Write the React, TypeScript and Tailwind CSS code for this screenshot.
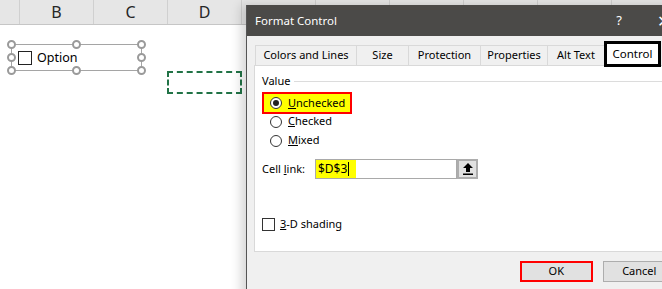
import React from "react";

const COLS = ["B", "C", "D", "", "", "", "", ""];

const TABS = [
  { label: "Colors and Lines", w: "w-[101px]" },
  { label: "Size", w: "w-[52px]" },
  { label: "Protection", w: "w-[72px]" },
  { label: "Properties", w: "w-[67px]" },
  { label: "Alt Text", w: "w-[57px]" },
];

function Handle() {
  return <span className="block w-[9px] h-[9px] rounded-full border-2 border-[#9a9a9a] bg-white" />;
}

function Radio({ checked }: { checked?: boolean }) {
  return (
    <span className="flex items-center justify-center w-[12px] h-[12px] rounded-full border border-[#333] bg-white shrink-0">
      {checked && <span className="block w-[6px] h-[6px] rounded-full bg-[#222]" />}
    </span>
  );
}

function UploadArrow() {
  return (
    <svg width="10" height="12" viewBox="0 0 10 12">
      <path d="M5 0 L10 5 L7 5 L7 9 L3 9 L3 5 L0 5 Z" fill="#000" />
      <rect x="0" y="10.5" width="10" height="1.5" fill="#000" />
    </svg>
  );
}

export default function App() {
  return (
    <div
      className="relative w-[662px] h-[289px] overflow-hidden bg-white"
      style={{ fontFamily: '"Noto Sans", "Open Sans", sans-serif' }}
    >
      {/* Sheet column header */}
      <div className="flex h-[25px] bg-[#e6e6e6] border-b border-[#c6c6c6]">
        <div className="w-[20px] shrink-0 border-r border-[#d0d0d0]" />
        {COLS.map((c, i) => (
          <div
            key={i}
            className="w-[74px] shrink-0 flex items-center justify-center border-r border-[#d0d0d0] text-[16px] text-[#262626]"
          >
            {c}
          </div>
        ))}
      </div>

      {/* Option form control with selection handles */}
      <div className="absolute left-[11px] top-[44px] w-[131px] h-[27px]">
        <div className="absolute inset-0 border border-[#a5a5a5]" />
        <div className="absolute left-[-4px] top-[-4px]"><Handle /></div>
        <div className="absolute left-[61px] top-[-4px]"><Handle /></div>
        <div className="absolute right-[-4px] top-[-4px]"><Handle /></div>
        <div className="absolute left-[-4px] top-[9px]"><Handle /></div>
        <div className="absolute right-[-4px] top-[9px]"><Handle /></div>
        <div className="absolute left-[-4px] bottom-[-4px]"><Handle /></div>
        <div className="absolute left-[61px] bottom-[-4px]"><Handle /></div>
        <div className="absolute right-[-4px] bottom-[-4px]"><Handle /></div>
        <div className="absolute left-[7px] top-[7px] flex items-center gap-[5px]">
          <span className="block w-[14px] h-[14px] border border-[#222] bg-white" />
          <span className="text-[12.5px] leading-[14px] text-black">Option</span>
        </div>
      </div>

      {/* Linked cell marching ants */}
      <div className="absolute left-[167px] top-[71px] w-[75px] h-[23px] border-2 border-dashed border-[#217346]" />

      {/* Format Control dialog */}
      <div className="absolute left-[246px] top-[5px] w-[430px] h-[300px] bg-[#f0f0f0] border-l border-[#555] shadow-[-5px_0_10px_rgba(0,0,0,0.16)] text-[11px] text-black">
        <div className="h-[31px] bg-[#4b4a48] flex items-center text-white text-[11.5px]">
          <span className="pl-[8px] flex-1">Format Control</span>
          <span className="text-[13px] mr-[35px]">?</span>
          <span className="text-[16px] mr-[6px]">✕</span>
        </div>

        <div className="pl-[7px] pt-[5px]">
          <div className="flex items-end h-[24px] ml-[1px]">
            {TABS.map((t) => (
              <div
                key={t.label}
                className={`${t.w} h-[20px] shrink-0 flex items-center justify-center border border-b-0 border-r-0 border-[#d9d9d9] first:border-l`}
              >
                {t.label}
              </div>
            ))}
            <div className="relative z-10 w-[57px] h-[26px] mb-[-2px] shrink-0 flex items-center justify-center bg-white border-[3px] border-black text-[11.5px]">
              Control
            </div>
          </div>

          <div className="h-[187px] bg-white border border-[#d9d9d9] pl-[7px] pt-[7px]">
            <div className="flex items-center h-[16px]">
              <span>Value</span>
              <span className="flex-1 ml-[4px] border-t border-[#dcdcdc]" />
            </div>

            <div className="mt-[3px] w-[90px] h-[22px] bg-[#ffff00] border-2 border-[#ff0000] flex items-center gap-[6px] pl-[6px]">
              <Radio checked />
              <span><u>U</u>nchecked</span>
            </div>
            <div className="mt-[-2px] h-[19px] flex items-center gap-[6px] pl-[8px]">
              <Radio />
              <span><u>C</u>hecked</span>
            </div>
            <div className="h-[19px] flex items-center gap-[6px] pl-[8px]">
              <Radio />
              <span><u>M</u>ixed</span>
            </div>

            <div className="mt-[9px] flex items-center h-[20px]">
              <span className="w-[53px]">Cell <u>l</u>ink:</span>
              <div className="w-[142px] h-[20px] border border-[#a9a9a9] flex items-center">
                <span className="h-[18px] w-[40px] bg-[#ffff00] flex items-center pl-[2px] text-[12px]">
                  $D$3<span className="ml-[1px] w-px h-[14px] bg-black" />
                </span>
              </div>
              <div className="w-[21px] h-[20px] border-2 border-[#adadad] bg-[#e1e1e1] flex items-center justify-center">
                <UploadArrow />
              </div>
            </div>

            <div className="mt-[37px] flex items-center gap-[5px]">
              <span className="block w-[13px] h-[13px] border border-[#333] bg-white" />
              <span><u>3</u>-D shading</span>
            </div>
          </div>
        </div>

        <div className="mt-[9px] pl-[273px] flex gap-[10px]">
          <div className="w-[74px] h-[21px] border-2 border-[#ff0000] bg-[#e1e1e1] flex items-center justify-center">
            OK
          </div>
          <div className="w-[75px] h-[21px] border border-[#adadad] bg-[#e1e1e1] flex items-center justify-center">
            Cancel
          </div>
        </div>
      </div>
    </div>
  );
}
